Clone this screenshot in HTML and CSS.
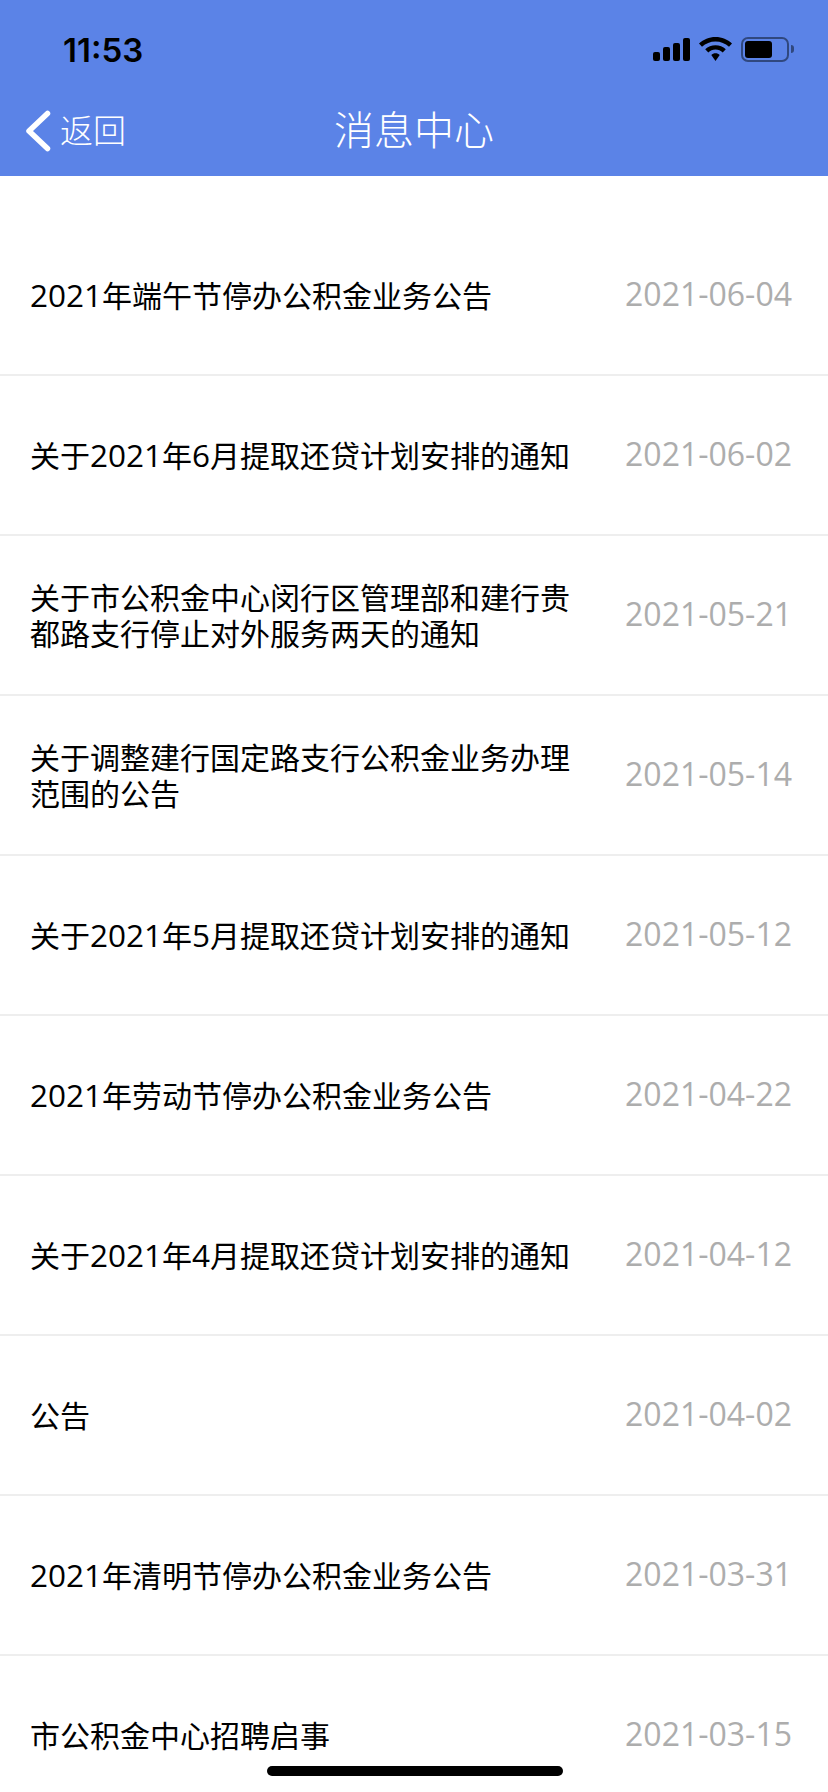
FILE: index.html
```html
<!DOCTYPE html>
<html lang="zh-CN">
<head>
<meta charset="utf-8">
<title>消息中心</title>
<link rel="stylesheet" href="styles.css">
</head>
<body>
<div class="page">
  <header class="header">
    <div class="status">
      <span class="time">11:53</span>
      <div class="status-icons">
        <svg class="signal" width="37" height="23" viewBox="0 0 37 23"><rect x="0" y="14" width="7" height="9" rx="2"/><rect x="10" y="9" width="7" height="14" rx="2"/><rect x="20" y="5" width="7" height="18" rx="2"/><rect x="30" y="0" width="7" height="23" rx="2"/></svg>
        <svg class="wifi" width="33" height="24" viewBox="0 0 33 24"><path d="M16.5 0C10 0 4.500 2.400 0 6.500L3 9.800C6.700 6.400 11.300 4.400 16.500 4.400S26.300 6.400 30 9.800L33 6.500C28.500 2.400 23 0 16.500 0Z"/><path d="M16.500 8.200C12.500 8.200 9 9.700 6.200 12.300L9.300 15.500C11.200 13.700 13.700 12.600 16.500 12.600S21.800 13.700 23.700 15.500L26.800 12.300C24 9.700 20.500 8.200 16.500 8.200Z"/><path d="M16.500 16.300C14.900 16.300 13.400 16.900 12.300 18L16.500 24L20.700 18C19.600 16.900 18.100 16.300 16.500 16.300Z"/></svg>
        <div class="battery"><div class="battery-level"></div></div>
        <div class="battery-cap"></div>
      </div>
    </div>
    <nav class="nav">
      <a class="back">
        <svg width="26" height="42" viewBox="0 0 26 42"><path d="M22.500 3.500L4 21L22.500 38.500" fill="none" stroke="#fff" stroke-width="5.500" stroke-linecap="round" stroke-linejoin="round"/></svg>
        <span class="back-label">返回</span>
      </a>
      <h1 class="title">消息中心</h1>
    </nav>
  </header>
  <main class="list">
    <div class="item"><div class="item-title"><span class="num">2021</span>年端午节停办公积金业务公告</div><div class="item-date">2021-06-04</div></div>
    <div class="item"><div class="item-title">关于<span class="num">2021</span>年<span class="num">6</span>月提取还贷计划安排的通知</div><div class="item-date">2021-06-02</div></div>
    <div class="item"><div class="item-title">关于市公积金中心闵行区管理部和建行贵都路支行停止对外服务两天的通知</div><div class="item-date">2021-05-21</div></div>
    <div class="item"><div class="item-title">关于调整建行国定路支行公积金业务办理范围的公告</div><div class="item-date">2021-05-14</div></div>
    <div class="item"><div class="item-title">关于<span class="num">2021</span>年<span class="num">5</span>月提取还贷计划安排的通知</div><div class="item-date">2021-05-12</div></div>
    <div class="item"><div class="item-title"><span class="num">2021</span>年劳动节停办公积金业务公告</div><div class="item-date">2021-04-22</div></div>
    <div class="item"><div class="item-title">关于<span class="num">2021</span>年<span class="num">4</span>月提取还贷计划安排的通知</div><div class="item-date">2021-04-12</div></div>
    <div class="item"><div class="item-title">公告</div><div class="item-date">2021-04-02</div></div>
    <div class="item"><div class="item-title"><span class="num">2021</span>年清明节停办公积金业务公告</div><div class="item-date">2021-03-31</div></div>
    <div class="item"><div class="item-title">市公积金中心招聘启事</div><div class="item-date">2021-03-15</div></div>
  </main>
  <div class="home-bar"></div>
</div>
</body>
</html>
```
FILE: styles.css
```css
* { box-sizing: border-box; margin: 0; padding: 0; }
html, body { height: 100%; overflow: hidden; background: #fff; }
body { font-family: "Noto Sans CJK SC", sans-serif; }
.page { position: relative; width: 828px; height: 1792px; overflow: hidden; }
.header { height: 176px; background: #5b83e7; display: flex; flex-direction: column; }
.status { height: 88px; padding: 31px 34px 0 63px; display: flex; justify-content: space-between; align-items: flex-start; }
.time { font-family: "Inter", "Liberation Sans", sans-serif; font-weight: 600; font-size: 33px; line-height: 38px; color: #000; }
.status-icons { display: flex; align-items: center; height: 24px; margin-top: 6px; }
.signal { margin-right: 9px; }
.wifi { margin-right: 9px; }
.battery { width: 48px; height: 25px; border: 2px solid #30487f; border-radius: 7px; padding: 2px; }
.battery-level { width: 27px; height: 17px; background: #000; border-radius: 3px; }
.battery-cap { width: 3px; height: 8px; margin-left: 2px; background: #30487f; border-radius: 0 3px 3px 0; }
.nav { position: relative; height: 88px; display: flex; align-items: center; justify-content: center; }
.back { position: absolute; left: 25px; top: 22px; display: flex; align-items: center; gap: 9px; color: #fff; font-size: 33px; line-height: 42px; font-weight: 300; }
.back-label { margin-top: -4px; }
.title { margin-top: -9px; color: #fff; font-size: 40px; line-height: 50px; font-weight: 300; }
.list { padding-top: 40px; }
.item { height: 160px; padding: 0 36px 3px 30px; border-bottom: 2px solid #eeeeee; display: flex; align-items: center; justify-content: space-between; }
.item-title { width: 544px; font-size: 30px; line-height: 36px; color: #000; font-weight: 400; }
.num { font-family: "Open Sans", sans-serif; font-size: 31.500px; line-height: 30px; }
.item-date { font-family: "Open Sans", sans-serif; font-size: 32px; line-height: 38px; color: #adadad; white-space: nowrap; }
.home-bar { position: absolute; left: 267px; bottom: 16px; width: 296px; height: 10px; border-radius: 5px; background: #000; }
```
